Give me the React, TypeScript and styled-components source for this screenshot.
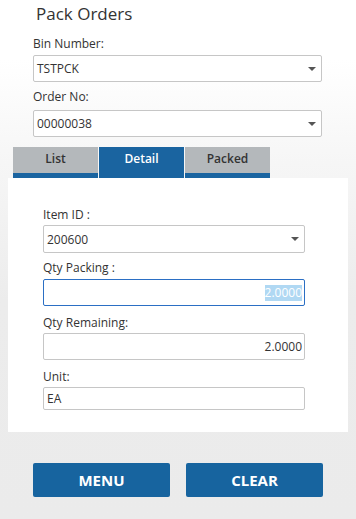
import React from "react";
import styled, { createGlobalStyle } from "styled-components";

const GlobalStyle = createGlobalStyle`
    html, body {
        margin: 0;
        padding: 0;
    }
    body {
        font-family: "Open Sans", "Noto Sans", sans-serif;
        color: #333;
    }
`;

const Page = styled.div`
    width: 356px;
    height: 519px;
    overflow: hidden;
    background: linear-gradient(
        to bottom,
        #ffffff 0,
        #ffffff 60px,
        #f7f7f7 150px,
        #ececec 300px,
        #ebebeb 519px
    );
`;

const Title = styled.h1`
    margin: 0;
    padding-left: 36px;
    font-size: 17px;
    font-weight: 400;
    line-height: 28px;
    color: #333;
`;

const Header = styled.div`
    padding: 0 34px 0 33px;
`;

const Label = styled.div<{ $top: number }>`
    margin-top: ${(p) => p.$top}px;
    font-size: 12px;
    line-height: 16px;
    color: #333;
`;

const Box = styled.div<{ $top: number; $h?: number; $focus?: boolean; $right?: boolean }>`
    position: relative;
    box-sizing: border-box;
    margin-top: ${(p) => p.$top}px;
    height: ${(p) => p.$h || 27}px;
    border: 1px solid ${(p) => (p.$focus ? "#2b6fc4" : "#c6c6c6")};
    border-radius: 2px;
    background: #fff;
    display: flex;
    align-items: center;
    justify-content: ${(p) => (p.$right ? "flex-end" : "flex-start")};
    padding: 0 2px 0 3px;
    font-size: 12px;
    color: #333;
`;

const Arrow = styled.span`
    position: absolute;
    right: 5px;
    top: 50%;
    margin-top: -2px;
    width: 0;
    height: 0;
    border-left: 4px solid transparent;
    border-right: 4px solid transparent;
    border-top: 4px solid #555;
`;

const Selected = styled.span`
    background: #b0d8f3;
    color: #fff;
    line-height: 16px;
`;

const Tabs = styled.div`
    display: flex;
    gap: 1px;
    margin-top: 10px;
    padding-left: 13px;
`;

const Tab = styled.div<{ $active?: boolean }>`
    box-sizing: border-box;
    width: 85px;
    height: 31px;
    border-bottom: 5px solid #1a64a0;
    background: ${(p) => (p.$active ? "#1a64a0" : "#b4b8bb")};
    color: ${(p) => (p.$active ? "#fff" : "#333")};
    font-size: 12px;
    font-weight: 600;
    line-height: 24px;
    text-align: center;
`;

const Panel = styled.div`
    box-sizing: border-box;
    margin: 0 8px;
    height: 254px;
    background: #fff;
    padding: 29px 43px 0 35px;
`;

const Buttons = styled.div`
    display: flex;
    gap: 16px;
    margin-top: 31px;
    padding-left: 33px;
`;

const Button = styled.button`
    width: 137px;
    height: 34px;
    border: none;
    border-radius: 2px;
    background: #17649f;
    color: #fff;
    font-family: "Open Sans", "Noto Sans", sans-serif;
    font-size: 15px;
    font-weight: 700;
    padding: 0;
`;

export default function App() {
    return (
        <Page>
            <GlobalStyle />
            <Title>Pack Orders</Title>
            <Header>
                <Label $top={8}>Bin Number:</Label>
                <Box $top={3}>
                    TSTPCK
                    <Arrow />
                </Box>
                <Label $top={7}>Order No:</Label>
                <Box $top={5}>
                    00000038
                    <Arrow />
                </Box>
            </Header>
            <Tabs>
                <Tab>List</Tab>
                <Tab $active>Detail</Tab>
                <Tab>Packed</Tab>
            </Tabs>
            <Panel>
                <Label $top={0}>Item ID :</Label>
                <Box $top={2} $h={28}>
                    200600
                    <Arrow />
                </Box>
                <Label $top={7}>Qty Packing :</Label>
                <Box $top={3} $focus $right>
                    <Selected>2.0000</Selected>
                </Box>
                <Label $top={9}>Qty Remaining:</Label>
                <Box $top={2} $right>
                    2.0000
                </Box>
                <Label $top={9}>Unit:</Label>
                <Box $top={2} $h={23}>
                    EA
                </Box>
            </Panel>
            <Buttons>
                <Button>MENU</Button>
                <Button>CLEAR</Button>
            </Buttons>
        </Page>
    );
}
